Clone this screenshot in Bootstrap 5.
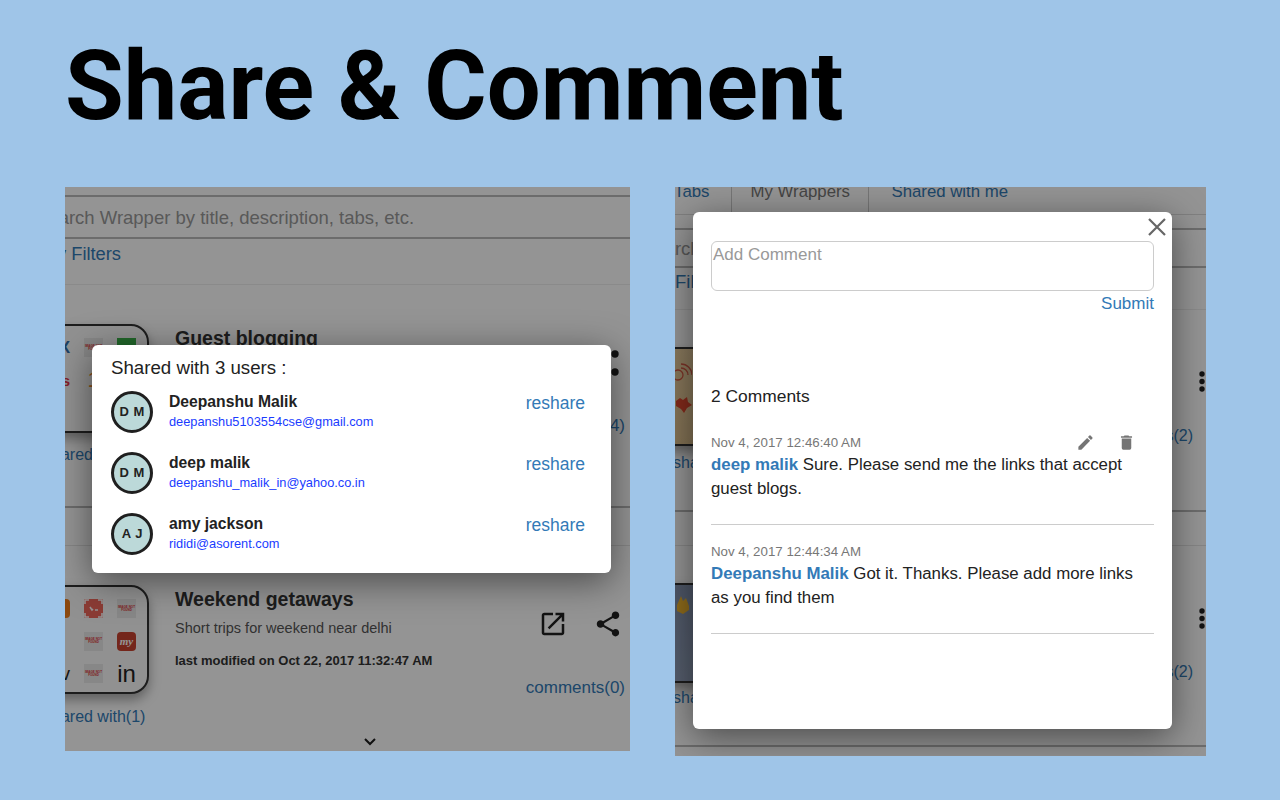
<!DOCTYPE html>
<html lang="en"><head><meta charset="utf-8"><title>Share &amp; Comment</title>
<link href="https://cdn.jsdelivr.net/npm/bootstrap@5.3.0/dist/css/bootstrap.min.css" rel="stylesheet">
<style>
html,body{height:100%}
body{background:#9fc5e8;font-family:"Liberation Sans",Arial,sans-serif;color:#222;overflow:hidden}
.sheet{padding:0 0 0 65px;width:1280px;height:800px}
.headline{font-family:Roboto,sans-serif;font-weight:700;font-size:95.500px;line-height:1;color:#000;margin:0;padding-top:39px;height:187px}
.shots{gap:45px}
.shot{position:relative;overflow:hidden;background:#fff;flex:none}
.shot-l{width:565px;height:564px}
.shot-r{width:531px;height:569px}
.dim{position:absolute;inset:0;background:rgba(0,0,0,.42)}
.lnk{color:#337ab7}
.app-top{height:8px}
.search{border-top:2px solid #bbb;border-bottom:2px solid #bbb;height:44px;font-size:18.500px;line-height:41px;color:#999;white-space:nowrap;overflow:hidden}
.search-txt{margin-left:-29px}
.filters{font-size:18.300px;line-height:30px;height:46px;border-bottom:1px solid #eee;white-space:nowrap}
.filters-txt{margin-left:-8px}
.item{display:flex;position:relative}
.thumb{flex:none;width:115px;height:109px;border:2px solid #333;border-radius:18px;background:#fafafa;margin-left:-31px;box-shadow:0 6px 12px rgba(0,0,0,.35);display:grid;grid-template-columns:repeat(3,19px);grid-auto-rows:19px;gap:13.500px 14px;padding:12px 11px 0 0;justify-content:end;overflow:hidden}
.cell{width:19px;height:19px;display:flex;align-items:center;justify-content:center;text-align:center;font-size:3px;line-height:1;font-weight:700;color:#d33;background:#e8e8e8}
.cell.o{background:#f07f1d;border-radius:4px}
.cell.r{background:#f0685c}
.cell.m{background:#c9432f;border-radius:4px;color:#fff;font-size:11px;font-style:italic;font-family:"Liberation Serif",serif}
.cell.g{background:#3bb44a}
.cell.n{background:transparent;justify-content:flex-end}
.it1{padding-top:39px;height:223px;border-bottom:2px solid #bbb}
.it2{padding-top:77px}
.it2::before{content:"";position:absolute;left:0;right:0;top:37px;border-top:1px solid #e6e6e6}
.it-title{font-size:19.500px;font-weight:700;line-height:24px;color:#333;margin:0}
.it-desc{font-size:14.500px;line-height:20px;color:#555;margin-top:7px}
.it-mod{font-size:13px;font-weight:700;line-height:16px;color:#333;margin-top:15px}
.it-body{padding-left:26px;padding-top:2px;flex:1}
.it-links{font-size:17px;line-height:20px;position:absolute;white-space:nowrap}
.it-links.sm{font-size:16px}
.pop{position:absolute;background:#fff;border-radius:6px;box-shadow:0 8px 36px rgba(0,0,0,.5)}
.pop-l{left:27px;top:158px;width:519px;height:228px;padding:12px 26px 0 19px}
.pop-h{font-size:18.700px;line-height:21px;margin:0}
.urow{height:61px;gap:15px}
.ava{width:42px;height:42px;flex:none;border:3px solid #1f1f1f;border-radius:50%;background:#bcd9d9;font-size:13px;font-weight:700;display:flex;align-items:center;justify-content:center;word-spacing:1px}
.who{margin:0 0 1px 1px}
.uname{font-size:15.700px;font-weight:700;line-height:18px}
.umail{font-size:12.800px;line-height:16px;color:#1a3cff;margin-top:3px}
.resh{font-size:17.500px;line-height:21px;color:#337ab7;margin-left:auto;align-self:flex-start;margin-top:12px}
.pop-r{left:18px;top:25px;width:479px;height:517px;padding:29px 18px 0 18px}
.xbtn{position:absolute;right:5px;top:5px;display:block;line-height:0}
.cmt-box{height:50px;border:1px solid #ccc;border-radius:6px;font-size:17px;line-height:20px;color:#999;padding:3px 0 0 1px}
.cmt-sub{text-align:right;font-size:17px;line-height:20px;color:#337ab7;margin-top:3px}
.cmt-count{font-size:17.400px;line-height:20px;margin-top:72px;color:#222}
.cmt{position:relative;border-bottom:1px solid #ccc;font-size:16.850px;line-height:24px}
.c1{margin-top:27px;height:92px;padding-top:3px}
.c2{height:109px;padding-top:20px}
.cdate{font-size:13.300px;line-height:14px;color:#777;margin-bottom:3px}
.cname{color:#337ab7;font-weight:700}
.cact{position:absolute;top:0;right:18px;gap:22px;line-height:0}
.r-tabs{display:flex;height:28px;font-size:16.800px;line-height:10px;border-bottom:1px solid #ddd;white-space:nowrap;color:#777}
.r-tabs>span{padding:0 18.500px;border-right:1px solid #ccc;height:28px}
.r-tabs>.tab-a{padding:0;margin-left:-1px;width:58px}
.r-tabs>.tab-c{border:0;padding-left:22px}
.r-search{margin-top:13px;height:40px;border-top:2px solid #bbb;border-bottom:2px solid #bbb;font-size:18.500px;line-height:38px;color:#999;white-space:nowrap;overflow:hidden}
.r-search-txt{margin-left:-33px}
.r-fil{font-size:18.500px;line-height:28px;height:42px;border-bottom:1px solid #eee}
.thumb-r{margin-left:-70px;display:block;padding:0}
.bg-tan{background:linear-gradient(#ecd0a0,#e2c592);height:99px}
.bg-slate{background:linear-gradient(#8796b2,#95a3bd);height:100px}
.r-it1{padding-top:37px;height:202px;border-bottom:2px solid #bbb}
.r-it2{padding-top:71px;height:235px;border-bottom:2px solid #bbb}
.r-it2::before{content:"";position:absolute;left:0;right:0;top:33px;border-top:1px solid #e6e6e6}
</style></head><body>
<div class="sheet">
<h1 class="headline">Share &amp; Comment</h1>
<div class="d-flex shots">

<div class="shot shot-l">
  <div class="app-top"></div>
  <div class="search"><div class="search-txt">Search Wrapper by title, description, tabs, etc.</div></div>
  <div class="filters lnk"><div class="filters-txt">y Filters</div></div>
  <div class="item it1">
    <div class="thumb">
      <div class="cell n" style="font-size:17px;color:#2f6fb0;font-weight:700">X</div><div class="cell">IMAGE NOT FOUND</div><div class="cell g"></div>
      <div class="cell n" style="font-size:15px;color:#e0334a">is</div><div class="cell n" style="font-size:22px;color:#ee8a2a;justify-content:center;font-weight:400">1</div><div class="cell"></div>
    </div>
    <div class="it-body"><h3 class="it-title">Guest blogging</h3></div>
    <span class="it-links sm lnk" style="left:-21px;top:160px">shared with(3)</span>
    <span class="it-links lnk" style="right:5px;top:131px">comments(4)</span>
    <svg style="position:absolute;right:11px;top:65px" width="8" height="26" viewBox="0 0 8 26" aria-hidden="true"><circle cx="4" cy="4" r="3.700" fill="#222"/><circle cx="4" cy="22" r="3.700" fill="#222"/></svg>
  </div>
  <div class="item it2">
    <div class="thumb">
      <div class="cell o"></div>
      <div class="cell r"><svg width="19" height="19" viewBox="0 0 19 19" fill="none" stroke="#fff" stroke-width="1.600" aria-hidden="true"><path d="M1 5V1h4M14 1h4v4M18 14v4h-4M5 18H1v-4M6 8l2 3 1-1M11 11h3"/></svg></div>
      <div class="cell">IMAGE NOT FOUND</div>
      <div class="cell n"></div><div class="cell">IMAGE NOT FOUND</div><div class="cell m">my</div>
      <div class="cell n" style="font-size:18px;color:#222;font-weight:400">v</div><div class="cell">IMAGE NOT FOUND</div><div class="cell n" style="font-size:24px;font-weight:400;color:#222;justify-content:center">in</div>
    </div>
    <div class="it-body">
      <h3 class="it-title">Weekend getaways</h3>
      <div class="it-desc">Short trips for weekend near delhi</div>
      <div class="it-mod">last modified on Oct 22, 2017 11:32:47 AM</div>
    </div>
    <span class="it-links sm lnk" style="left:-21px;top:199px">shared with(1)</span>
    <span class="it-links lnk" style="right:5px;top:170px">comments(0)</span>
    <svg style="position:absolute;right:62.500px;top:100.500px" width="30" height="30" viewBox="0 0 24 24" fill="#222" aria-hidden="true"><path d="M19 19H5V5h7V3H5c-1.110 0-2 .9-2 2v14c0 1.100.89 2 2 2h14c1.100 0 2-.9 2-2v-7h-2v7zM14 3v2h3.590l-9.830 9.830 1.410 1.410L19 6.410V10h2V3h-7z"/></svg>
    <svg style="position:absolute;right:7.500px;top:100.500px" width="30" height="30" viewBox="0 0 24 24" fill="#222" aria-hidden="true"><path d="M18 16.080c-.76 0-1.440.3-1.960.77L8.910 12.700c.05-.23.09-.46.09-.7s-.04-.47-.09-.7l7.050-4.110c.54.5 1.250.81 2.040.81 1.660 0 3-1.340 3-3s-1.340-3-3-3-3 1.340-3 3c0 .24.04.47.09.7L8.040 9.810C7.500 9.310 6.790 9 6 9c-1.660 0-3 1.340-3 3s1.340 3 3 3c.79 0 1.500-.31 2.040-.81l7.120 4.160c-.05.21-.08.43-.08.65 0 1.610 1.310 2.920 2.920 2.920 1.610 0 2.920-1.310 2.920-2.920s-1.310-2.920-2.920-2.920z"/></svg>
  </div>
  <div class="dim"></div>
  <svg style="position:absolute;left:299px;top:551px" width="12" height="8" viewBox="0 0 12 8" fill="none" stroke="#111" stroke-width="2" aria-hidden="true"><path d="M1 1l5 5 5-5"/></svg>
  <div class="pop pop-l">
    <p class="pop-h">Shared with 3 users :</p>
    <div class="d-flex align-items-center urow" style="margin-top:3px">
      <div class="ava">D M</div><div class="who"><div class="uname">Deepanshu Malik</div><div class="umail">deepanshu5103554cse@gmail.com</div></div><span class="resh">reshare</span>
    </div>
    <div class="d-flex align-items-center urow">
      <div class="ava">D M</div><div class="who"><div class="uname">deep malik</div><div class="umail">deepanshu_malik_in@yahoo.co.in</div></div><span class="resh">reshare</span>
    </div>
    <div class="d-flex align-items-center urow">
      <div class="ava">A J</div><div class="who"><div class="uname">amy jackson</div><div class="umail">rididi@asorent.com</div></div><span class="resh">reshare</span>
    </div>
  </div>
</div>

<div class="shot shot-r">
  <div class="r-tabs"><span class="lnk tab-a">Tabs</span><span>My Wrappers</span><span class="lnk tab-c">Shared with me</span></div>
  <div class="r-search"><div class="r-search-txt">Search</div></div>
  <div class="r-fil lnk">Filters</div>
  <div class="item r-it1">
    <div class="thumb thumb-r bg-tan">
      <svg class="d-block" width="85" height="97" viewBox="0 0 85 97" fill="none" aria-hidden="true"><g transform="translate(68 0)"><circle cx="3" cy="26" r="5" stroke="#d65a45" stroke-width="1.300"/><path d="M6 19a7 7 0 0 1 7 7M6 15a11 11 0 0 1 11 11" stroke="#d65a45" stroke-width="1.300"/></g><path d="M69 52l4-3 3 2 4-3 1 5 4 3-5 3-3 5-3-4-5-3z" fill="#e2492f"/></svg>
    </div>
    <span class="it-links sm lnk" style="left:-2px;top:143px">shared</span>
    <span class="it-links sm lnk" style="right:13px;top:116px">comments(2)</span>
    <svg style="position:absolute;right:0;top:60px" width="8" height="22" viewBox="0 0 8 22" aria-hidden="true"><circle cx="4" cy="4" r="2.700" fill="#222"/><circle cx="4" cy="11.500" r="2.700" fill="#222"/><circle cx="4" cy="19" r="2.700" fill="#222"/></svg>
  </div>
  <div class="item r-it2">
    <div class="thumb thumb-r bg-slate">
      <svg class="d-block" width="85" height="98" viewBox="0 0 85 98" aria-hidden="true"><path d="M70 20l4-9 2 5 3-3 3 8 0 4-6 4-6-3z" fill="#f5b92f"/></svg>
    </div>
    <span class="it-links sm lnk" style="left:-2px;top:176px">shared</span>
    <span class="it-links sm lnk" style="right:13px;top:150px">comments(2)</span>
    <svg style="position:absolute;right:0;top:95px" width="8" height="22" viewBox="0 0 8 22" aria-hidden="true"><circle cx="4" cy="4" r="2.700" fill="#222"/><circle cx="4" cy="11.500" r="2.700" fill="#222"/><circle cx="4" cy="19" r="2.700" fill="#222"/></svg>
  </div>
  <div class="dim"></div>
  <div class="pop pop-r">
    <svg class="xbtn" width="20" height="20" viewBox="0 0 20 20" stroke="#666" stroke-width="2.200" fill="none" aria-hidden="true"><path d="M2 2l16 16M18 2L2 18"/></svg>
    <div class="cmt-box">Add Comment</div>
    <div class="cmt-sub">Submit</div>
    <div class="cmt-count">2 Comments</div>
    <div class="cmt c1">
      <div class="cdate">Nov 4, 2017 12:46:40 AM</div>
      <div class="d-flex cact">
        <svg width="19" height="19" viewBox="0 0 24 24" fill="#757575" aria-hidden="true"><path d="M3 17.250V21h3.750L17.810 9.940l-3.750-3.750L3 17.250zM20.710 7.040a1 1 0 0 0 0-1.410l-2.340-2.340a1 1 0 0 0-1.410 0l-1.830 1.830 3.750 3.750 1.830-1.830z"/></svg>
        <svg width="19" height="19" viewBox="0 0 24 24" fill="#757575" aria-hidden="true"><path d="M6 19a2 2 0 0 0 2 2h8a2 2 0 0 0 2-2V7H6v12zM19 4h-3.500l-1-1h-5l-1 1H5v2h14V4z"/></svg>
      </div>
      <div><span class="cname">deep malik</span> Sure. Please send me the links that accept guest blogs.</div>
    </div>
    <div class="cmt c2">
      <div class="cdate">Nov 4, 2017 12:44:34 AM</div>
      <div><span class="cname">Deepanshu Malik</span> Got it. Thanks. Please add more links as you find them</div>
    </div>
  </div>
</div>

</div>
</div>
</body></html>
